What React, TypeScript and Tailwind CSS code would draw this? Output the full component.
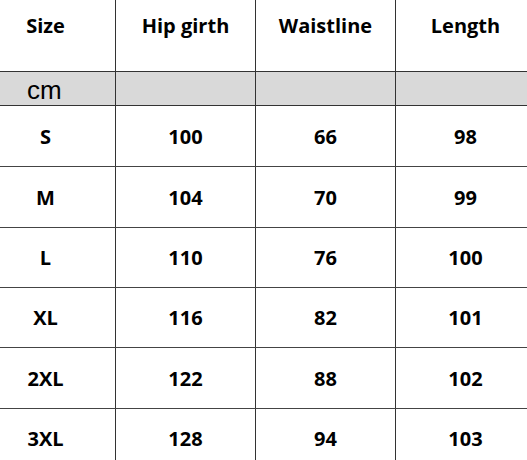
import React from "react";

const headers = ["Size", "Hip girth", "Waistline", "Length"];
const rows: { cells: string[]; h: string }[] = [
  { cells: ["S", "100", "66", "98"], h: "h-[61px]" },
  { cells: ["M", "104", "70", "99"], h: "h-[61px]" },
  { cells: ["L", "110", "76", "100"], h: "h-[60px]" },
  { cells: ["XL", "116", "82", "101"], h: "h-[60px]" },
  { cells: ["2XL", "122", "88", "102"], h: "h-[61px]" },
  { cells: ["3XL", "128", "94", "103"], h: "h-[60px]" },
];

export default function App() {
  return (
    <div className="w-[527px] h-[460px] overflow-hidden bg-white">
      <div
        className="ml-[-24px] w-[560px] text-black"
        style={{ fontFamily: '"Open Sans", "DejaVu Sans", sans-serif' }}
      >
        <div className="flex h-[72px] border-b border-[#333]">
          {headers.map((t) => (
            <div
              key={t}
              className="w-[140px] border-r border-[#333] flex justify-center pt-[12px] text-[20px] leading-[28px] font-bold"
            >
              {t}
            </div>
          ))}
        </div>
        <div className="flex h-[34px] border-b border-[#333] bg-[#d9d9d9]">
          <div
            className="w-[140px] border-r border-[#333] flex items-center pl-[51px] pt-[2px] text-[26px] leading-[30px] font-medium"
            style={{ fontFamily: '"Liberation Sans", Arial, sans-serif' }}
          >
            cm
          </div>
          <div className="w-[140px] border-r border-[#333]" />
          <div className="w-[140px] border-r border-[#333]" />
          <div className="w-[140px] border-r border-[#333]" />
        </div>
        {rows.map((r) => (
          <div key={r.cells[0]} className={`flex ${r.h} border-b border-[#444]`}>
            {r.cells.map((c, i) => (
              <div
                key={i}
                className="w-[140px] border-r border-[#333] flex items-center justify-center pt-[1px] text-[20px] leading-[28px] font-bold"
              >
                {c}
              </div>
            ))}
          </div>
        ))}
      </div>
    </div>
  );
}
